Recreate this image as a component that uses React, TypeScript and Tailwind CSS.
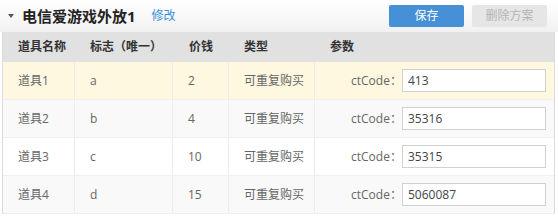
import type { ReactNode } from 'react';

interface Item {
    readonly name: string;
    readonly flag: string;
    readonly price: string;
    readonly type: string;
    readonly code: string;
}

const ITEMS: Item[] = [
    { name: '道具1', flag: 'a', price: '2', type: '可重复购买', code: '413' },
    { name: '道具2', flag: 'b', price: '4', type: '可重复购买', code: '35316' },
    { name: '道具3', flag: 'c', price: '10', type: '可重复购买', code: '35315' },
    { name: '道具4', flag: 'd', price: '15', type: '可重复购买', code: '5060087' },
];

const ROW_BG = ['bg-[#fff8e1]', 'bg-[#f9f9f9]', 'bg-white', 'bg-[#f9f9f9]'];

const GRID = 'grid grid-cols-[72px_98px_56px_86px_1fr]';

function Cell({ children, last }: { readonly children: ReactNode; readonly last?: boolean }) {
    return (
        <div className={`flex items-center pl-[15px] ${last ? '' : 'border-r border-[#ececec]'}`}>
            {children}
        </div>
    );
}

function App() {
    return (
        <div
            className="w-[558px] h-[217px] bg-white text-[12px] text-[#666]"
            style={{ fontFamily: '"Open Sans", "Noto Sans CJK SC", sans-serif' }}
        >
            {/* Title bar */}
            <div className="h-[32px] flex items-center bg-gradient-to-b from-white to-[#f1f1f1] pl-[8px] pr-[11px]">
                <svg className="w-[6px] h-[4px] mr-[8px]" viewBox="0 0 6 4">
                    <path d="M0 0h6L3 4z" fill="#555" />
                </svg>
                <span className="text-[15px] font-bold text-[#222] leading-none">电信爱游戏外放1</span>
                <a className="ml-[16px] text-[12px] text-[#3d8fd9] cursor-pointer">修改</a>
                <div className="ml-auto flex gap-[8px]">
                    <button
                        type="button"
                        className="w-[75px] h-[22px] rounded-[2px] bg-[#4590d6] text-white text-[12px]"
                    >
                        保存
                    </button>
                    <button
                        type="button"
                        className="w-[75px] h-[22px] rounded-[2px] bg-[#e6e6e6] text-[#b5b5b5] text-[12px]"
                    >
                        删除方案
                    </button>
                </div>
            </div>

            {/* Table */}
            <div className="ml-[2px] mr-[3px] border-x border-[#dcdcdc]">
                <div className={`${GRID} h-[30px] bg-[#e1e1e1] font-bold text-[#333]`}>
                    <div className="flex items-center pl-[15px]">道具名称</div>
                    <div className="flex items-center pl-[15px]">标志（唯一）</div>
                    <div className="flex items-center pl-[16px]">价钱</div>
                    <div className="flex items-center pl-[15px]">类型</div>
                    <div className="flex items-center pl-[15px]">参数</div>
                </div>
                {ITEMS.map((item, i) => (
                    <div
                        key={item.name}
                        className={`${GRID} h-[38px] border-b border-[#efefef] ${ROW_BG[i]}`}
                    >
                        <Cell>{item.name}</Cell>
                        <Cell>{item.flag}</Cell>
                        <Cell>{item.price}</Cell>
                        <Cell>{item.type}</Cell>
                        <div className="flex items-center pl-[36px]">
                            <span className="w-[51px] shrink-0">ctCode：</span>
                            <input
                                type="text"
                                defaultValue={item.code}
                                className="w-[144px] h-[23px] border border-[#d0d0d0] bg-white pl-[5px] text-[12px] text-[#444] outline-none"
                            />
                        </div>
                    </div>
                ))}
            </div>
        </div>
    );
}

export default App;
